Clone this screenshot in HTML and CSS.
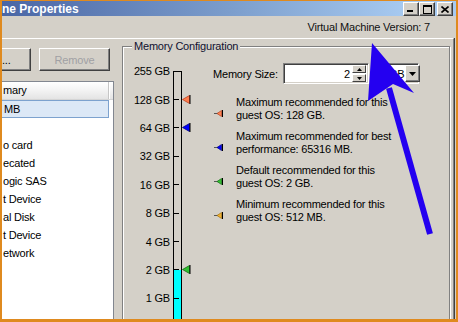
FILE: index.html
```html
<!DOCTYPE html>
<html lang="en">

<head>
    <meta charset="UTF-8">
    <meta name="viewport" content="width=device-width, initial-scale=1.0">
    <title>Virtual Machine Properties</title>
    <link rel="stylesheet" href="styles.css">
</head>

<body>
    <div class="frame">
        <!-- barra de titulo -->
        <div class="titlebar">
            <span class="title">ne Properties</span>
            <div class="caption-btns">
                <span class="cap cap-min"><svg width="6" height="2" viewBox="0 0 6 2"><rect width="6" height="2"/></svg></span>
                <span class="cap"><svg width="9" height="9" viewBox="0 0 9 9"><rect x="0.5" y="0.5" width="8" height="8" fill="none" stroke="#000"/><rect width="9" height="2"/></svg></span>
                <span class="cap cap-close"><svg width="8" height="7" viewBox="0 0 8 7"><path d="M0.5 0.5l7 6M7.5 0.5l-7 6" stroke="#000" stroke-width="1.6"/></svg></span>
            </div>
        </div>

        <div class="version">Virtual Machine Version: 7</div>

        <div class="page">
            <div class="hw-col">
                <div class="btn-row">
                    <button class="btn btn-add">...</button>
                    <button class="btn btn-remove" disabled>Remove</button>
                </div>
                <div class="list">
                    <div class="list-head"><span>mary</span></div>
                    <div class="row sel">MB</div>
                    <div class="row"></div>
                    <div class="row">o card</div>
                    <div class="row">ecated</div>
                    <div class="row">ogic SAS</div>
                    <div class="row">t Device</div>
                    <div class="row">al Disk</div>
                    <div class="row">t Device</div>
                    <div class="row">etwork</div>
                </div>
            </div>

            <fieldset class="group">
                <legend>Memory Configuration</legend>
                <div class="group-body">
                    <!-- escala de memoria -->
                    <div class="scale">
                        <div class="tick-row"><span class="tick-lbl">255 GB</span><span class="track first"></span></div>
                        <div class="tick-row"><span class="tick-lbl">128 GB</span><span class="track"></span>
                            <span class="mark"><svg width="9" height="9" viewBox="0 0 9 9"><polygon points="0.5,4.5 7.5,0.5 7.5,8.5" fill="#ff7f50" stroke="#c04020" stroke-width="0.8"/><path d="M8 0v9" stroke="#000"/></svg></span></div>
                        <div class="tick-row"><span class="tick-lbl">64 GB</span><span class="track"></span>
                            <span class="mark"><svg width="9" height="9" viewBox="0 0 9 9"><polygon points="0.5,4.5 7.5,0.5 7.5,8.5" fill="#0000ff" stroke="#000080" stroke-width="0.8"/><path d="M8 0v9" stroke="#000"/></svg></span></div>
                        <div class="tick-row"><span class="tick-lbl">32 GB</span><span class="track"></span></div>
                        <div class="tick-row"><span class="tick-lbl">16 GB</span><span class="track"></span></div>
                        <div class="tick-row"><span class="tick-lbl">8 GB</span><span class="track"></span></div>
                        <div class="tick-row"><span class="tick-lbl">4 GB</span><span class="track"></span></div>
                        <div class="tick-row"><span class="tick-lbl">2 GB</span><span class="track fill-half"></span>
                            <span class="mark"><svg width="9" height="9" viewBox="0 0 9 9"><polygon points="0.5,4.5 7.5,0.5 7.5,8.5" fill="#33c033" stroke="#107010" stroke-width="0.8"/><path d="M8 0v9" stroke="#000"/></svg></span></div>
                        <div class="tick-row"><span class="tick-lbl">1 GB</span><span class="track fill"></span></div>
                        <div class="tick-row"><span class="tick-lbl"></span><span class="track fill"></span></div>
                    </div>

                    <div class="settings">
                        <div class="size-row">
                            <span class="size-lbl">Memory Size:</span>
                            <div class="field spin-field">
                                <span class="value">2</span>
                                <span class="spin">
                                    <span class="spin-btn"><svg width="5" height="3" viewBox="0 0 5 3"><polygon points="2.5,0 5,3 0,3"/></svg></span>
                                    <span class="spin-btn"><svg width="5" height="3" viewBox="0 0 5 3"><polygon points="0,0 5,0 2.5,3"/></svg></span>
                                </span>
                            </div>
                            <div class="field combo">
                                <span class="combo-val">GB</span>
                                <span class="drop-btn"><svg width="7" height="4" viewBox="0 0 7 4"><polygon points="0,0 7,0 3.5,4"/></svg></span>
                            </div>
                        </div>

                        <ul class="legend">
                            <li><span class="ico"><svg width="9" height="7" viewBox="0 0 9 7"><path d="M0 3.5h4" stroke="#555"/><polygon points="3,3.5 7.5,0.5 7.5,6.5" fill="#ff7f50" stroke="#b04020" stroke-width="0.7"/><path d="M8.5 0v7" stroke="#000"/></svg></span>
                                <span>Maximum recommended for this<br>guest OS: 128 GB.</span></li>
                            <li><span class="ico"><svg width="9" height="7" viewBox="0 0 9 7"><path d="M0 3.5h4" stroke="#555"/><polygon points="3,3.5 7.5,0.5 7.5,6.5" fill="#0000ff" stroke="#000080" stroke-width="0.7"/><path d="M8.5 0v7" stroke="#000"/></svg></span>
                                <span>Maximum recommended for best<br>performance: 65316 MB.</span></li>
                            <li><span class="ico"><svg width="9" height="7" viewBox="0 0 9 7"><path d="M0 3.5h4" stroke="#555"/><polygon points="3,3.5 7.5,0.5 7.5,6.5" fill="#33c033" stroke="#107010" stroke-width="0.7"/><path d="M8.5 0v7" stroke="#000"/></svg></span>
                                <span>Default recommended for this<br>guest OS: 2 GB.</span></li>
                            <li><span class="ico"><svg width="9" height="7" viewBox="0 0 9 7"><path d="M0 3.5h4" stroke="#555"/><polygon points="3,3.5 7.5,0.5 7.5,6.5" fill="#f0b030" stroke="#a07010" stroke-width="0.7"/><path d="M8.5 0v7" stroke="#000"/></svg></span>
                                <span>Minimum recommended for this<br>guest OS: 512 MB.</span></li>
                        </ul>
                    </div>
                </div>
            </fieldset>
        </div>
    </div>

    <!-- seta de anotacao por cima da janela -->
    <svg class="annot" width="458" height="322" viewBox="0 0 458 322">
        <path d="M389 88L430 234" stroke="#2400f0" stroke-width="6"/>
        <polygon points="372,43 414,93 393,84 368,101" fill="#2400f0"/>
    </svg>
</body>

</html>
```

FILE: styles.css
```css
body {
    margin: 0;
    width: 458px;
    height: 322px;
    overflow: hidden;
    position: relative;
    background: #df8a1f;
    font-family: "Liberation Sans", Arial, sans-serif;
    font-size: 11px;
    letter-spacing: -0.2px;
    color: #000;
}

.frame {
    margin: 1px 2px 0 2px;
    height: 318px;
    background: #d4d0c8;
    display: flex;
    flex-direction: column;
    overflow: hidden;
}

/* barra de titulo */
.titlebar {
    height: 15px;
    flex: none;
    display: flex;
    align-items: center;
    background: linear-gradient(to right, #4a66a5, #7b9dcc 50%, #a8cbf1 90%);
}

.title {
    color: #fff;
    font-weight: bold;
    font-size: 12px;
    letter-spacing: 0;
}

.caption-btns {
    margin-left: auto;
    margin-right: 3px;
    display: flex;
    align-self: flex-start;
    padding-top: 1px;
}

.cap {
    width: 16px;
    height: 14px;
    box-sizing: border-box;
    background: #d4d0c8;
    border: 1px solid;
    border-color: #fff #404040 #404040 #fff;
    box-shadow: inset -1px -1px #808080;
    display: flex;
    align-items: center;
    justify-content: center;
}

.cap-min {
    align-items: flex-end;
    justify-content: flex-start;
    padding: 0 0 3px 3px;
}

.cap-close {
    margin-left: 2px;
}

.version {
    height: 22px;
    flex: none;
    display: flex;
    align-items: center;
    justify-content: flex-end;
    padding-right: 26px;
    color: #111;
}

/* pagina do separador */
.page {
    flex: 1;
    min-height: 0;
    margin-right: 2px;
    border-top: 1px solid #fff;
    border-right: 1px solid #808080;
    box-shadow: 1px 0 #404040;
    display: flex;
    gap: 8px;
    padding-right: 2px;
    overflow: hidden;
}

.hw-col {
    width: 112px;
    flex: none;
    display: flex;
    flex-direction: column;
}

.btn-row {
    margin-top: 9px;
    display: flex;
    gap: 8px;
}

.btn {
    height: 23px;
    padding: 0;
    background: #d4d0c8;
    font-family: inherit;
    font-size: 11px;
    letter-spacing: -0.2px;
    border: 1px solid;
    border-color: #fff #404040 #404040 #fff;
    box-shadow: inset -1px -1px #808080;
    color: #000;
}

.btn-add {
    width: 29px;
    border-left: none;
    text-align: left;
}

.btn-remove {
    width: 71px;
    color: #a0a0a4;
}

.list {
    margin-top: 10px;
    flex: 1;
    background: #fff;
    border-top: 1px solid #828790;
    border-right: 1px solid #828790;
}

.list-head {
    height: 17px;
    line-height: 17px;
    background: linear-gradient(#ffffff, #f3f3f3 50%, #e4e4e4);
    border-bottom: 1px solid #d5d5d5;
}

.list-head span {
    display: block;
    width: 107px;
    padding-left: 1px;
    box-sizing: border-box;
    border-right: 1px solid #c6c6c6;
    box-shadow: 1px 0 #fff;
}

.row {
    height: 18px;
    line-height: 18px;
    padding-left: 1px;
    box-sizing: border-box;
}

.row.sel {
    width: 107px;
    line-height: 16px;
    padding-left: 2px;
    background: #dce8f6;
    border: 1px solid #7da2ce;
    border-left: none;
}

/* caixa de grupo */
.group {
    margin: 1px 0 0 0;
    padding: 0;
    width: 328px;
    height: 300px;
    box-sizing: border-box;
    flex: none;
    border: 1px solid #808080;
    box-shadow: inset 1px 1px #fff, 1px 1px #fff;
    min-width: 0;
}

.group legend {
    margin-left: 9px;
    padding: 0 2px;
    line-height: 13px;
    background: #d4d0c8;
    color: #101030;
}

.group-body {
    display: flex;
    padding-top: 4px;
}

.scale {
    width: 68px;
    flex: none;
    display: flex;
    flex-direction: column;
}

.tick-row {
    height: 28.4px;
    flex: none;
    display: flex;
}

.tick-lbl {
    width: 47px;
    display: flex;
    align-items: center;
    justify-content: flex-end;
}

.track {
    width: 7px;
    margin-left: 3px;
    border-left: 1px solid #000;
    border-right: 1px solid #000;
    background: linear-gradient(#000, #000) no-repeat 0 50% / 5px 1px;
}

.track.first {
    margin-top: 14px;
    border-top: 1px solid #000;
    background: none;
}

.track.fill-half {
    background: linear-gradient(#000, #000) no-repeat 0 50% / 5px 1px,
        linear-gradient(transparent 50%, #00ffff 50%);
}

.track.fill {
    background: linear-gradient(#000, #000) no-repeat 0 50% / 5px 1px, #00ffff;
}

.mark {
    width: 9px;
    display: flex;
    align-items: center;
}

.mark svg {
    display: block;
}

.settings {
    margin-left: 22px;
    flex: 1;
}

.size-row {
    margin-top: 6px;
    display: flex;
    align-items: center;
}

.size-lbl {
    width: 70px;
}

.field {
    height: 21px;
    box-sizing: border-box;
    background: #fff;
    border: 1px solid;
    border-color: #808080 #fff #fff #808080;
    box-shadow: inset 1px 1px #404040, inset -1px -1px #d4d0c8;
    display: flex;
    align-items: center;
}

.spin-field {
    width: 86px;
    padding: 2px 2px 2px 2px;
}

.value {
    flex: 1;
    text-align: right;
    padding-right: 2px;
}

.spin {
    width: 14px;
    height: 17px;
    display: flex;
    flex-direction: column;
    gap: 1px;
}

.spin-btn,
.drop-btn {
    flex: 1;
    background: #d4d0c8;
    border: 1px solid;
    border-color: #fff #404040 #404040 #fff;
    box-sizing: border-box;
    display: flex;
    align-items: center;
    justify-content: center;
}

.spin-btn svg,
.drop-btn svg {
    display: block;
}

.combo {
    width: 48px;
    margin-left: 2px;
    padding: 2px;
}

.combo-val {
    flex: 1;
    padding-left: 15px;
}

.drop-btn {
    flex: none;
    width: 15px;
    height: 17px;
    box-shadow: inset -1px -1px #808080;
}

.legend {
    list-style: none;
    margin: 12px 0 0 0;
    padding: 0;
}

.legend li {
    display: flex;
    line-height: 13px;
    margin-bottom: 8px;
}

.ico {
    width: 23px;
    flex: none;
    padding-top: 14px;
    padding-left: 1px;
    box-sizing: border-box;
}

.ico svg {
    display: block;
}

.annot {
    position: absolute;
    left: 0;
    top: 0;
    pointer-events: none;
}
```
